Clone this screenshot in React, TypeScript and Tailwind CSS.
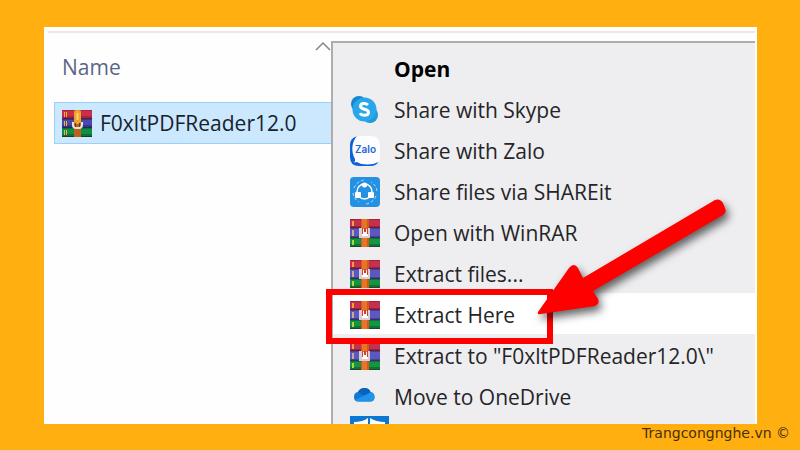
import type { ReactNode } from "react";

function ArchiveIcon() {
  return (
    <svg width="30" height="28" viewBox="0 0 30 28" aria-hidden="true" className="block">
      <rect width="30" height="9" fill="#a81f3c" />
      <rect y="1" width="30" height="6" fill="#c4304e" />
      <rect y="9" width="30" height="10" fill="#4a3f9f" />
      <rect y="10" width="30" height="7" fill="#5b58c0" />
      <rect y="19" width="30" height="9" fill="#08772f" />
      <rect y="20" width="30" height="5" fill="#159444" />
      <path d="M0 8.5h30M0 18.5h30M0 27.5h30" stroke="#3a2038" strokeOpacity="0.6" />
      <path d="M2 2h2v5H2z" fill="#f0a13a" />
      <path d="M2 11h2v6H2z" fill="#c3ae94" />
      <path d="M2 21h2v5H2z" fill="#a9d83c" />
      <rect x="11" width="8" height="28" fill="#cf5a1c" />
      <rect x="12" width="5" height="28" fill="#e8742a" />
      <path d="M9 9h3v8h6V9h2v10H9z" fill="#d8cfd6" />
      <path d="M12 10h6v7h-6z" fill="#ffffff" />
      <path d="M12 9h1v6h-1zM17 9h1v6h-1zM14 9h2v4h-2z" fill="#d2402a" />
    </svg>
  );
}

function ArchiveFileIcon() {
  return (
    <svg width="30" height="27" viewBox="0 0 30 27" aria-hidden="true" className="block shrink-0">
      <rect width="30" height="9" fill="#b01f3c" />
      <rect y="1" width="30" height="5" fill="#c72f4c" />
      <rect y="9" width="30" height="9" fill="#33358f" />
      <rect y="10" width="30" height="5" fill="#484bae" />
      <rect y="18" width="30" height="9" fill="#087237" />
      <rect y="19" width="30" height="5" fill="#148c45" />
      <path d="M0 8.5h30M0 17.5h30M0 26.5h30" stroke="#2b2030" strokeOpacity="0.7" />
      <path d="M2 2h1v5H2zM4 2h1v5H4zM2 11h1v5H2zM4 11h1v5H4zM2 20h1v5H2zM4 20h1v5H4z" fill="#f2b53b" />
      <rect x="12" width="7" height="27" fill="#b8641c" />
      <rect x="12" width="7" height="14" rx="3" fill="#f0a32c" />
      <path d="M15.5 3v7" stroke="#ffd36b" strokeWidth="2" />
      <path d="M11 12v3q0 3 3 3h3q3 0 3-3v-3" fill="none" stroke="#e8e2d8" strokeWidth="2" />
      <path d="M13 13h1v4h-1zM17 13h1v4h-1z" fill="#5b3b22" />
    </svg>
  );
}

function SkypeIcon() {
  return (
    <svg width="30" height="28" viewBox="0 0 30 28" aria-hidden="true" className="block">
      <circle cx="9" cy="8" r="8" fill="#1687c9" />
      <circle cx="20" cy="19" r="8" fill="#1d9ad8" />
      <circle cx="14.5" cy="13.5" r="12" fill="#28a8ea" />
      <path
        d="M18 9Q16.500 7.500 14 7.500q-3.500 0-3.500 2.800c0 4 8 2 8 6q0 3-4.300 3-3 0-4.300-2"
        fill="none"
        stroke="#ffffff"
        strokeWidth="3"
      />
    </svg>
  );
}

function ZaloIcon() {
  return (
    <svg width="30" height="30" viewBox="0 0 30 30" aria-hidden="true" className="block">
      <path d="M9 0h12q9 0 9 9v12q0 9-9 9H9q-9 0-9-9V9q0-9 9-9z" fill="#fdfdff" />
      <path
        d="M7 .3Q0 2 0 9v12q0 9 9 9h12q5 0 7.500-4-5 2.500-11 2.500-7 0-10.500-2.500l-3 .5q1.500-1.500 1-3.500C1 16 1.500 6 7 .3z"
        fill="#0b62dc"
      />
      <text x="5" y="17" fontSize="10" fontWeight="600" fill="#1f66d6" className="font-['Inter',sans-serif]">
        Zalo
      </text>
    </svg>
  );
}

function ShareitIcon() {
  return (
    <svg width="30" height="30" viewBox="0 0 30 30" aria-hidden="true" className="block">
      <rect width="30" height="30" rx="4" fill="#2491e2" />
      <path
        d="M4 11A13 13 0 0 1 14 3M26 19A13 13 0 0 1 16 27M3 16a12 12 0 0 0 6 9M27 14a12 12 0 0 0-6-9"
        fill="none"
        stroke="#b9e2ff"
        strokeDasharray="3 2"
      />
      <circle cx="14.5" cy="14.5" r="7.5" fill="none" stroke="#ffffff" strokeWidth="1.5" />
      <circle cx="14.5" cy="8" r="2.5" fill="#ffffff" />
      <rect x="5" y="15" width="6" height="6" rx="1" fill="#ffffff" />
      <rect x="18" y="15" width="6" height="6" rx="1" fill="#ffffff" />
    </svg>
  );
}

function OneDriveIcon() {
  return (
    <svg width="30" height="28" viewBox="0 0 30 28" aria-hidden="true" className="block">
      <path d="M8 9Q10 5 14.500 5q4.500 0 6 4 4 .5 4 5 0 4.500-4.500 4.500H8.500Q4 18.500 4 14t4-5z" fill="#0f78d4" />
      <path d="M8 9Q10 5 14.500 5q4.500 0 6 4l-6 3.500L8 9z" fill="#0a62bd" />
      <path d="M5 17l9.500-4.500 6-3q4 .5 4 4.500 0 4.500-4.500 4.500H8.500Q6 18.500 5 17z" fill="#2193e8" />
    </svg>
  );
}

function DefenderIcon() {
  return (
    <svg width="39" height="39" viewBox="0 0 39 39" aria-hidden="true" className="block">
      <rect width="39" height="39" fill="#0c78d1" />
      <path d="M4 6q9 0 14-4v33Q4 27 4 6zM20 2q6 4 15 4 0 21-15 29z" fill="#ffffff" />
    </svg>
  );
}

type MenuEntry = { label: string; icon?: ReactNode; bold?: boolean; active?: boolean };

const entries: MenuEntry[] = [
  { label: "Open", bold: true },
  { label: "Share with Skype", icon: <SkypeIcon /> },
  { label: "Share with Zalo", icon: <ZaloIcon /> },
  { label: "Share files via SHAREit", icon: <ShareitIcon /> },
  { label: "Open with WinRAR", icon: <ArchiveIcon /> },
  { label: "Extract files...", icon: <ArchiveIcon /> },
  { label: "Extract Here", icon: <ArchiveIcon />, active: true },
  { label: 'Extract to "F0xltPDFReader12.0\\"', icon: <ArchiveIcon /> },
  { label: "Move to OneDrive", icon: <OneDriveIcon /> },
];

function Callout() {
  return (
    <>
      <div className="pointer-events-none absolute -top-1 -left-[7px] z-10 h-[55px] w-[227px] border-[6px] border-[#fe0000]" />
      <svg
        width="208"
        height="136"
        viewBox="0 0 208 136"
        aria-hidden="true"
        className="pointer-events-none absolute -top-[100px] left-[198px] z-20 drop-shadow-[3px_5px_4px_rgba(0,0,0,0.6)]"
      >
        <path
          d="M7 119L38 75q5-6 9 0l5 10L184 7q5-2 8 3l2 5q2 5-2 7L62 98l5 8q2 5-3 7l-54 8q-4 1-3-2z"
          fill="#fe0000"
        />
      </svg>
    </>
  );
}

function ContextMenu() {
  return (
    <div role="menu" className="min-w-0 flex-1 border-t-2 border-l-2 border-[#adadad] bg-[#eeedef] pt-1">
      {entries.map((entry) => (
        <div key={entry.label} className="relative">
          <button
            type="button"
            role="menuitem"
            className={`flex h-[41px] w-full items-center pt-0.5 pl-[17px] text-left whitespace-nowrap ${
              entry.active ? "bg-white" : ""
            } ${entry.bold ? "font-bold text-black" : "text-[#252528]"}`}
          >
            <span className="w-11 shrink-0">{entry.icon}</span>
            {entry.label}
          </button>
          {entry.active && <Callout />}
        </div>
      ))}
      <button type="button" role="menuitem" aria-label="Scan" className="flex h-[41px] w-full pl-[17px]">
        <DefenderIcon />
      </button>
    </div>
  );
}

export default function App() {
  return (
    <div className="flex h-screen flex-col bg-[#ffaf10] pt-[27px] pr-[43px] pl-11 font-['Open_Sans','Noto_Sans',sans-serif] text-[21px] leading-7">
      <main className="min-h-0 flex-1 overflow-hidden bg-[#fefefe] pt-1 pr-0.5">
        <div className="ml-1 h-0.5 bg-[#ede8e8]" />
        <div className="mt-2 flex">
          <section className="w-[287px] shrink-0 pl-2.5">
            <div className="relative flex h-[61px] items-start pt-3 pl-2">
              <h2 className="text-[#5a6685]">Name</h2>
              <svg width="16" height="10" viewBox="0 0 16 10" aria-hidden="true" className="absolute top-0 right-0">
                <path d="M1 9l7-7 7 7" fill="none" stroke="#858585" strokeWidth="1.5" />
              </svg>
            </div>
            <button
              type="button"
              className="flex h-[42px] w-full items-center gap-2 border border-r-0 border-[#99d1fa] bg-[#cce8ff] pl-[7px] text-left whitespace-nowrap text-[#16222d]"
            >
              <ArchiveFileIcon />
              F0xltPDFReader12.0
            </button>
          </section>
          <ContextMenu />
        </div>
      </main>
      <footer className="-mr-[33px] h-[26px] shrink-0 text-right font-['DejaVu_Sans',Verdana,sans-serif] text-[14px] leading-[18px] text-[#4a3005]">
        Trangcongnghe.vn ©
      </footer>
    </div>
  );
}
